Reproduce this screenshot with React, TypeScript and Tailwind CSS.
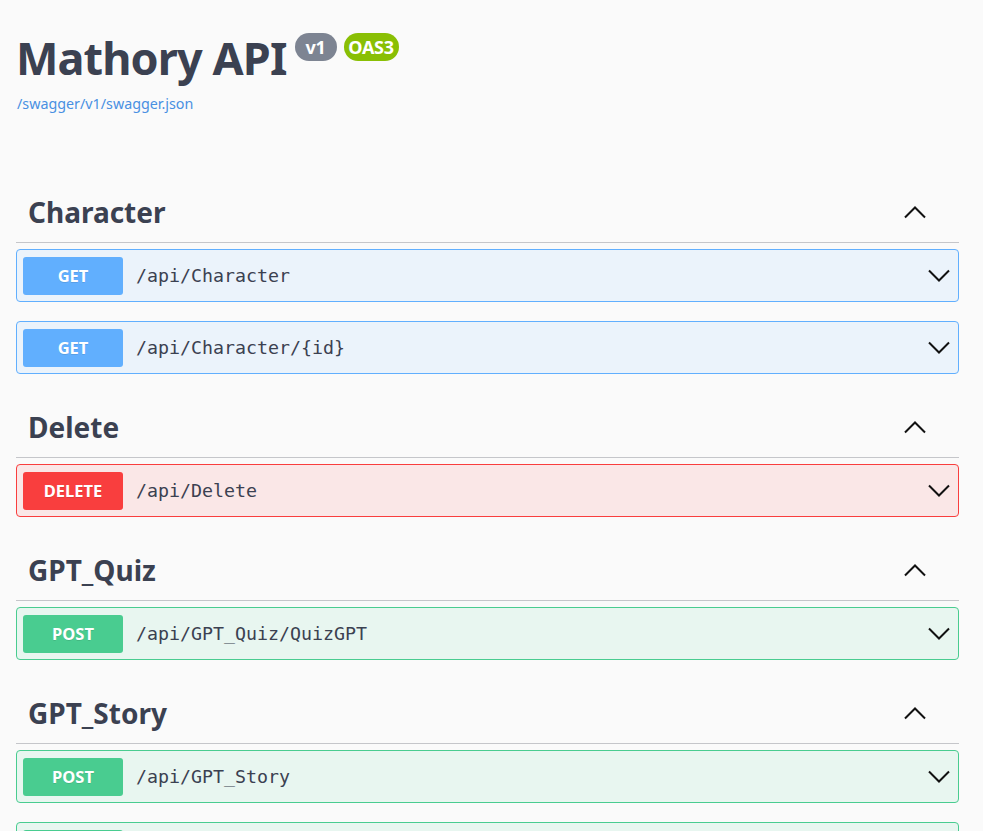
import React from "react";

type Method = "GET" | "POST" | "DELETE";

const styles: Record<Method, { block: string; badge: string }> = {
  GET: { block: "bg-[#ebf3fb] border-[#61affe]", badge: "bg-[#61affe]" },
  POST: { block: "bg-[#e8f6f0] border-[#49cc90]", badge: "bg-[#49cc90]" },
  DELETE: { block: "bg-[#fae7e7] border-[#f93e3e]", badge: "bg-[#f93e3e]" },
};

function Chevron({ up }: { up?: boolean }) {
  return (
    <svg width="22" height="14" viewBox="0 0 22 14" className="shrink-0">
      <polyline
        points={up ? "1,12.5 11,2.5 21,12.5" : "1,1.5 11,11.5 21,1.5"}
        fill="none"
        stroke="#111111"
        strokeWidth="2"
      />
    </svg>
  );
}

function Op({ method, path }: { method: Method; path: string }) {
  const s = styles[method];
  return (
    <div
      className={`mb-[19px] flex h-[53px] items-start rounded-[4px] border pl-[6px] pr-[8px] pt-[7px] ${s.block}`}
    >
      <div
        className={`flex h-[38px] w-[100px] shrink-0 items-center justify-center rounded-[3px] text-[16.5px] font-bold text-white ${s.badge}`}
        style={{ textShadow: "0 1px 0 rgba(0,0,0,0.1)" }}
      >
        {method}
      </div>
      <div className="ml-[13px] flex h-[38px] flex-1 items-center font-['DejaVu_Sans_Mono',monospace] text-[18.3px] text-[#3b4151]">
        {path}
      </div>
      <div className="flex h-[38px] items-center">
        <Chevron />
      </div>
    </div>
  );
}

function Section({ title, ops }: { title: string; ops: { method: Method; path: string }[] }) {
  return (
    <section>
      <div className="flex h-[65px] items-center justify-between border-b border-[#c5c6ca] pl-[12px] pr-[33px] pt-[3px]">
        <h3 className="text-[28px] font-bold leading-[36px] text-[#3b4151]">{title}</h3>
        <Chevron up />
      </div>
      <div className="pt-[6px]">
        {ops.map((o, i) => (
          <Op key={i} method={o.method} path={o.path} />
        ))}
      </div>
    </section>
  );
}

export default function App() {
  return (
    <div className="min-h-screen bg-[#fafafa] font-['Noto_Sans',sans-serif] text-[#3b4151]">
      <div className="w-[943px] ml-[16px] pt-[34px]">
        <div className="flex items-start">
          <h1 className="text-[45px] font-bold leading-[48px] tracking-[-0.9px] text-[#3b4151]">
            Mathory API
          </h1>
          <div className="ml-[8px] -mt-[1px] flex h-[28px] w-[42px] items-center justify-center rounded-full bg-[#7d8492] text-[18px] font-bold tracking-[-0.3px] text-white">
            v1
          </div>
          <div className="ml-[7px] -mt-[1px] flex h-[28px] w-[55px] items-center justify-center rounded-full bg-[#89bf04] text-[18px] font-bold tracking-[-0.3px] text-white">
            OAS3
          </div>
        </div>
        <div className="mt-[12px] text-[14.3px] leading-[20px]">
          <a className="text-[#4990e2] pl-[1px]" href="#">
            /swagger/v1/swagger.json
          </a>
        </div>
        <div className="mt-[64px]">
          <Section
            title="Character"
            ops={[
              { method: "GET", path: "/api/Character" },
              { method: "GET", path: "/api/Character/{id}" },
            ]}
          />
          <Section title="Delete" ops={[{ method: "DELETE", path: "/api/Delete" }]} />
          <Section title="GPT_Quiz" ops={[{ method: "POST", path: "/api/GPT_Quiz/QuizGPT" }]} />
          <Section
            title="GPT_Story"
            ops={[
              { method: "POST", path: "/api/GPT_Story" },
              { method: "POST", path: "/api/GPT_Story/Image" },
            ]}
          />
        </div>
      </div>
    </div>
  );
}
